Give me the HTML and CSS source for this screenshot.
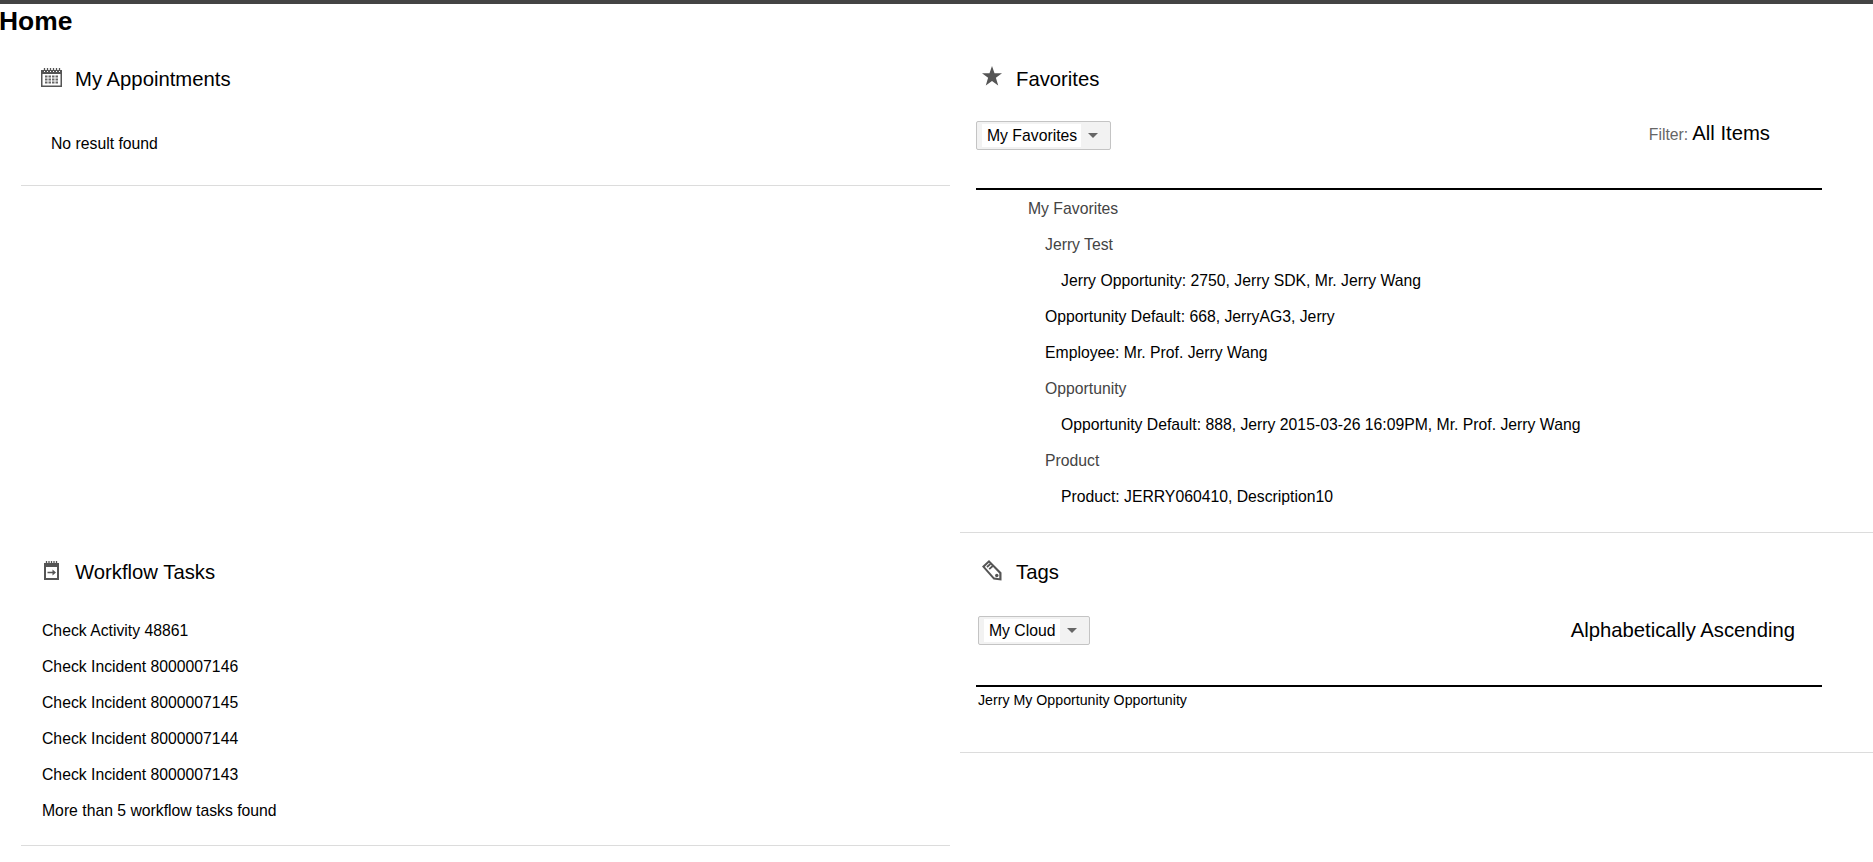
FILE: index.html
```html
<!DOCTYPE html>
<html lang="en">
<head>
<meta charset="utf-8">
<title>Home</title>
<link rel="stylesheet" href="styles.css">
</head>
<body>
<h1 class="page-title">Home</h1>
<main class="dashboard">
  <section class="panel panel-left panel-appointments">
    <header class="panel-head">
      <svg class="icon icon-cal" viewBox="0 0 21 19"><path fill="#555" fill-rule="evenodd" d="M0 2h21v17H0zM1.500 6v11.500h18V6z"/><path stroke="#fff" stroke-width="1" d="M3.500 2v2M6.500 2v2M9.500 2v2M12.500 2v2M15.500 2v2M18.500 2v2" /><path stroke="#555" stroke-width="1.300" d="M3.500 0v3M6.500 0v3M9.500 0v3M12.500 0v3M15.500 0v3M18.500 0v3"/><path fill="#666" d="M4 7.500h2.500v2H4zM7.500 7.500H10v2H7.500zM11 7.500h2.500v2H11zM14.500 7.500H17v2h-2.500zM4 10.500h2.500v2H4zM7.500 10.500H10v2H7.500zM11 10.500h2.500v2H11zM14.500 10.500H17v2h-2.500zM4 13.500h2.500v2H4zM7.500 13.500H10v2H7.500zM11 13.500h2.500v2H11zM14.500 13.500H17v2h-2.500z"/></svg>
      <h2>My Appointments</h2>
    </header>
    <p class="empty">No result found</p>
  </section>

  <section class="panel panel-right panel-favorites">
    <header class="panel-head">
      <svg class="icon icon-star" viewBox="0 0 20 20"><path fill="#555" d="M10 0l2.500 7.300H20l-6.100 4.500 2.300 7.700L10 14.900l-6.200 4.600 2.300-7.700L0 7.300h7.500z"/></svg>
      <h2>Favorites</h2>
    </header>
    <div class="toolbar toolbar-fav">
      <div class="select select-fav"><span class="select-label">My Favorites</span><span class="select-arrow"></span></div>
      <div class="filter"><span class="filter-key">Filter:</span> <span class="filter-value">All Items</span></div>
    </div>
    <ul class="tree">
      <li class="group l1">My Favorites</li>
      <li class="group l2">Jerry Test</li>
      <li class="l3">Jerry Opportunity: 2750, Jerry SDK, Mr. Jerry Wang</li>
      <li class="l2">Opportunity Default: 668, JerryAG3, Jerry</li>
      <li class="l2">Employee: Mr. Prof. Jerry Wang</li>
      <li class="group l2">Opportunity</li>
      <li class="l3">Opportunity Default: 888, Jerry 2015-03-26 16:09PM, Mr. Prof. Jerry Wang</li>
      <li class="group l2">Product</li>
      <li class="l3">Product: JERRY060410, Description10</li>
    </ul>
  </section>

  <section class="panel panel-left panel-workflow">
    <header class="panel-head">
      <svg class="icon icon-task" viewBox="0 0 15 19"><path fill="#555" fill-rule="evenodd" d="M0 2h15v17H0zM2 6v11h11V6z"/><path stroke="#555" stroke-width="1.300" d="M2.500 0v3M5 0v3M7.500 0v3M10 0v3M12.500 0v3"/><path fill="#555" d="M3.500 10.800h5V8.500l3.500 3-3.500 3v-2.200h-5z"/></svg>
      <h2>Workflow Tasks</h2>
    </header>
    <ul class="tasks">
      <li>Check Activity 48861</li>
      <li>Check Incident 8000007146</li>
      <li>Check Incident 8000007145</li>
      <li>Check Incident 8000007144</li>
      <li>Check Incident 8000007143</li>
      <li>More than 5 workflow tasks found</li>
    </ul>
  </section>

  <section class="panel panel-right panel-tags">
    <header class="panel-head">
      <svg class="icon icon-tag" viewBox="0 0 20 21"><path fill="#555" fill-rule="evenodd" d="M7 0L0 6.500 11.500 19.500 19.500 20.500 19.500 12.500zM7 2.800l10.300 10.600v4.900l-5-.7L2.800 6.700z"/><path stroke="#555" stroke-width="1.800" d="M5 7l3.500-3.200M7.200 9.200l3.500-3.200"/><circle cx="14.800" cy="15.500" r="1.700" fill="#555"/></svg>
      <h2>Tags</h2>
    </header>
    <div class="toolbar toolbar-tags">
      <div class="select select-tags"><span class="select-label">My Cloud</span><span class="select-arrow"></span></div>
      <div class="sort">Alphabetically Ascending</div>
    </div>
    <p class="cloud">Jerry My Opportunity Opportunity</p>
  </section>
</main>
</body>
</html>
```
FILE: styles.css
```css
* { box-sizing: border-box; }
html, body { margin: 0; padding: 0; }
body {
  height: 862px;
  overflow: hidden;
  background: #fff;
  color: #000;
  font-family: "Liberation Sans", Arial, sans-serif;
  font-size: 15.75px;
  border-top: 4px solid #444;
}
.page-title {
  margin: 0 0 0 -1px;
  font-size: 26.4px;
  line-height: 34px;
  height: 39px;
  font-weight: bold;
}
.dashboard {
  display: grid;
  grid-template-columns: 960px 913px;
  grid-template-rows: 493px auto;
  align-items: start;
}
.panel-left { margin: 0 10px 0 21px; border-bottom: 1px solid #dcdcdc; }
.panel-right { border-bottom: 1px solid #dcdcdc; }
.panel-head {
  display: flex;
  align-items: center;
  height: 61px;
  padding-top: 11px;
}
.panel-head h2 { margin: 0; font-size: 20.3px; font-weight: normal; }
.icon { display: block; flex: none; }
.icon-cal { width: 21px; height: 19px; margin: -4px 13px 0 20px; }
.icon-task { width: 15px; height: 19px; margin: -4px 16px 0 23px; }
.icon-star { width: 20px; height: 20px; margin: -6px 14px 0 22px; }
.icon-tag { width: 20px; height: 21px; margin: -4px 14px 0 22px; }

.empty { margin: 0; padding: 30px 0 0 30px; height: 81px; line-height: 20px; }

.toolbar { display: flex; justify-content: space-between; align-items: center; }
.toolbar-fav { height: 86px; border-bottom: 2px solid #000; margin: 0 51px 0 16px; padding-bottom: 22px; }
.toolbar-tags { height: 90px; border-bottom: 2px solid #000; margin: 0 51px 0 16px; padding: 0 27px 21px 2px; }

.select {
  display: flex;
  align-items: stretch;
  height: 29px;
  padding: 2px 0 2px 5px;
  background: #f2f2f2;
  border: 1px solid #c4c4c4;
  border-radius: 2px;
  line-height: 23px;
}
.select-label { padding: 0 4px 0 5px; background: #fff; }
.select-fav { width: 135px; }
.select-tags { width: 112px; }
.select-arrow {
  align-self: center;
  width: 0; height: 0;
  margin-left: 7px;
  border: 5px solid transparent;
  border-top-color: #666;
  border-bottom-width: 0;
}
.filter { padding: 0 52px 4px 0; display: flex; align-items: baseline; gap: 4px; }
.filter-key { color: #666; }
.filter-value { font-size: 20.3px; }
.sort { font-size: 20.3px; }

.tree, .tasks { list-style: none; margin: 0; padding: 0; }
.tree { padding: 1px 0 17px; }
.tree li { height: 36px; line-height: 36px; }
.tree .group { color: #444; }
.l1 { padding-left: 68px; }
.l2 { padding-left: 85px; }
.l3 { padding-left: 101px; }

.tasks { padding: 16px 0 16px 21px; }
.tasks li { height: 36px; line-height: 36px; }

.cloud { margin: 0; padding: 3px 0 0 18px; height: 65px; font-size: 14.2px; line-height: 20px; }
```
